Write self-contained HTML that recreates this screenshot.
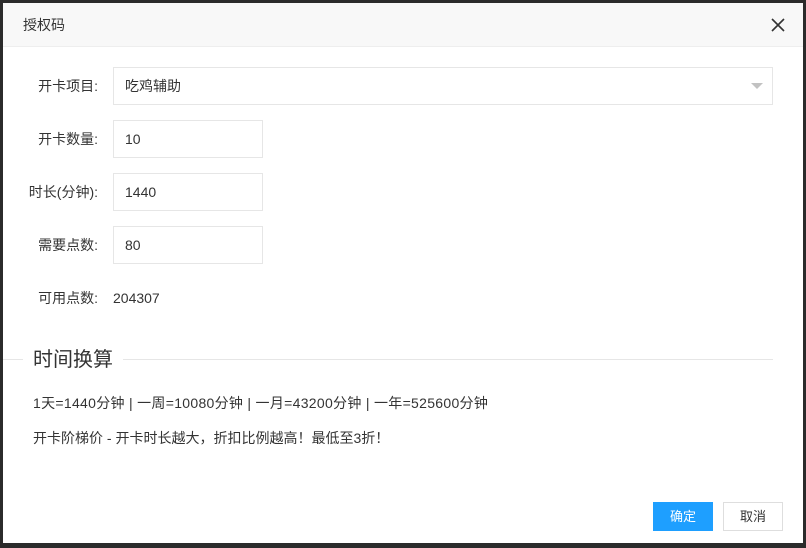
<!DOCTYPE html>
<html><head><meta charset="utf-8"><style>
*{margin:0;padding:0;box-sizing:border-box}
body{width:806px;height:548px;background:#2b2b2b;font-family:"Liberation Sans","Noto Sans CJK SC",sans-serif;font-size:14px;color:#333;position:relative;overflow:hidden}
.dlg{position:absolute;left:3px;top:3px;width:800px;height:540px;background:#fff}
.hd{position:absolute;left:0;top:0;width:800px;height:44px;background:#f8f8f8;border-bottom:1px solid #eee;font-size:14px;line-height:44px;padding-left:20px;color:#333}
.x{position:absolute;width:14px;height:14px}
.lbl{position:absolute;width:96px;text-align:right;line-height:18px}
.in{position:absolute;border:1px solid #e6e6e6;background:#fff;padding-left:11px;line-height:37px}
.tri{position:absolute;left:751px;top:83px;width:0;height:0;border-left:6px solid transparent;border-right:6px solid transparent;border-top:6px solid #c2c2c2}
.line{position:absolute;top:359px;height:1px;background:#e6e6e6}
.btn{position:absolute;top:502px;width:60px;height:29px;line-height:29px;text-align:center;font-size:13px}
</style></head><body>
<div class="dlg"></div>
<div class="hd" style="left:3px;top:3px">授权码</div>
<svg class="x" style="left:771px;top:18px" viewBox="0 0 14 14"><path d="M1 1L13 13M13 1L1 13" stroke="#333" stroke-width="1.6"/></svg>
<div class="lbl" style="left:2px;top:77px">开卡项目:</div>
<div class="in" style="left:113px;top:67px;width:660px;height:38px">吃鸡辅助</div>
<div class="tri"></div>
<div class="lbl" style="left:2px;top:130px">开卡数量:</div>
<div class="in" style="left:113px;top:120px;width:150px;height:38px">10</div>
<div class="lbl" style="left:2px;top:183px">时长(分钟):</div>
<div class="in" style="left:113px;top:173px;width:150px;height:38px">1440</div>
<div class="lbl" style="left:2px;top:236px">需要点数:</div>
<div class="in" style="left:113px;top:226px;width:150px;height:38px">80</div>
<div class="lbl" style="left:2px;top:289px">可用点数:</div>
<div style="position:absolute;left:113px;top:289px;line-height:18px">204307</div>
<div class="line" style="left:3px;width:20px"></div>
<div class="line" style="left:123px;width:650px"></div>
<div style="position:absolute;left:33px;top:347px;font-size:20px;line-height:26px;color:#333">时间换算</div>
<div style="position:absolute;left:33px;top:394px;line-height:18px;letter-spacing:0.3px;white-space:nowrap">1天=1440分钟 | 一周=10080分钟 | 一月=43200分钟 | 一年=525600分钟</div>
<div style="position:absolute;left:33px;top:429px;line-height:18px">开卡阶梯价 - 开卡时长越大，折扣比例越高！最低至3折！</div>
<div class="btn" style="left:653px;background:#1e9fff;color:#fff">确定</div>
<div class="btn" style="left:723px;border:1px solid #dedede;color:#333;line-height:27px">取消</div>
</body></html>
